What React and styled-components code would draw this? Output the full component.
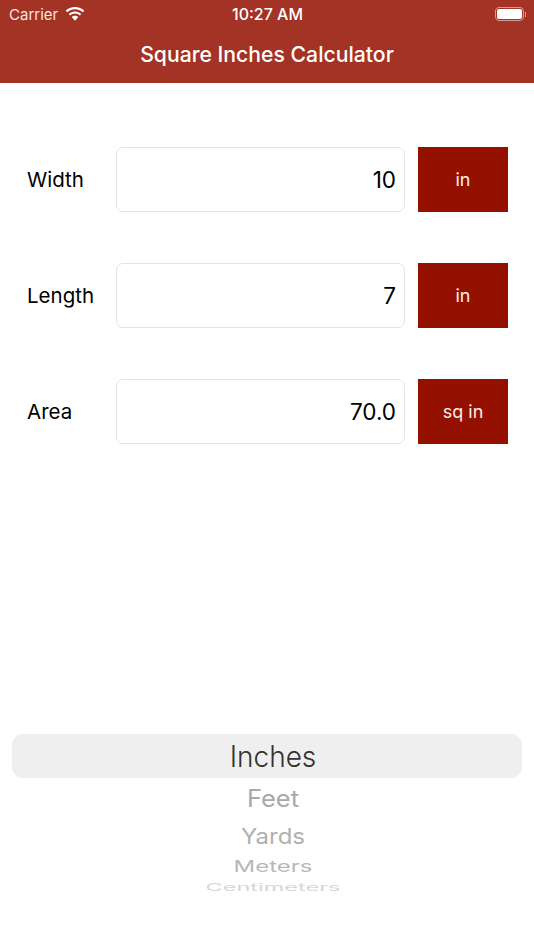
import React from 'react';
import styled, { createGlobalStyle } from 'styled-components';

const rows = [
  { label: 'Width', value: '10', unit: 'in' },
  { label: 'Length', value: '7', unit: 'in' },
  { label: 'Area', value: '70.0', unit: 'sq in' }
];

const wheel = [
  { name: 'Feet', size: 25.5, scale: 0.94, color: '#a9a9a9', height: 40 },
  { name: 'Yards', size: 24, scale: 0.9, color: '#b0b0b0', height: 36 },
  { name: 'Meters', size: 24, scale: 0.67, color: '#b8b8b8', height: 24 },
  { name: 'Centimeters', size: 23.5, scale: 0.46, color: '#d6d6d6', height: 18 }
];

const App = () => (
  <>
    <GlobalStyle />
    <Page>
      <Header>
        <StatusBar>
          <Carrier>
            Carrier
            <svg width="20" height="15" viewBox="0 0 20 15">
              <path
                d="M10 2.2c3 0 5.700 1.100 7.800 3.100l1.500-1.600C16.800 1.300 13.600 0 10 0S3.200 1.300.7 3.700l1.500 1.600C4.300 3.300 7 2.200 10 2.200z"
                fill="#fff"
              />
              <path
                d="M10 6.600c1.900 0 3.500.7 4.800 1.900l1.500-1.600C14.600 5.300 12.400 4.400 10 4.400s-4.600.9-6.300 2.500l1.500 1.600C6.500 7.300 8.100 6.600 10 6.600z"
                fill="#fff"
              />
              <path
                d="M10 8.800c-1.300 0-2.400.5-3.300 1.300L10 13.700l3.300-3.600C12.400 9.300 11.300 8.800 10 8.800z"
                fill="#fff"
              />
            </svg>
          </Carrier>
          <Clock>10:27 AM</Clock>
          <Battery>
            <BatteryShell>
              <BatteryFill />
            </BatteryShell>
            <BatteryCap />
          </Battery>
        </StatusBar>
        <Title>Square Inches Calculator</Title>
      </Header>

      <Form>
        {rows.map(row => (
          <Row key={row.label}>
            <Label>{row.label}</Label>
            <ValueBox>{row.value}</ValueBox>
            <UnitButton>{row.unit}</UnitButton>
          </Row>
        ))}
      </Form>

      <Picker>
        <Selected>
          <SelectedText>Inches</SelectedText>
        </Selected>
        {wheel.map(item => (
          <WheelItem key={item.name} $height={item.height}>
            <WheelText $size={item.size} $scale={item.scale} $color={item.color}>
              {item.name}
            </WheelText>
          </WheelItem>
        ))}
      </Picker>
    </Page>
  </>
);

const GlobalStyle = createGlobalStyle`
  html, body {
    margin: 0;
    padding: 0;
    background: #fff;
  }

  body {
    font-family: Inter, "Liberation Sans", sans-serif;
  }
`;

const Page = styled.div`
  width: 534px;
  height: 950px;
  overflow: hidden;
  display: flex;
  flex-direction: column;
  background: #fff;
`;

const Header = styled.header`
  height: 83px;
  background: #a33325;
  color: #fff;
  display: flex;
  flex-direction: column;
`;

const StatusBar = styled.div`
  height: 28px;
  display: grid;
  grid-template-columns: 1fr auto 1fr;
  align-items: center;
  padding: 0 8px 0 9px;
`;

const Carrier = styled.div`
  display: flex;
  align-items: center;
  gap: 7px;
  color: #f6e4e1;
  font-size: 15px;
`;

const Clock = styled.div`
  font-size: 16px;
  font-weight: 500;
`;

const Battery = styled.div`
  justify-self: end;
  display: flex;
  align-items: center;
  gap: 1px;
`;

const BatteryShell = styled.div`
  width: 29px;
  height: 14px;
  box-sizing: border-box;
  border: 1.5px solid #d69a92;
  border-radius: 4px;
  padding: 1px;
`;

const BatteryFill = styled.div`
  height: 100%;
  background: #fff;
  border-radius: 2px;
`;

const BatteryCap = styled.div`
  width: 1px;
  height: 5px;
  background: #d69a92;
`;

const Title = styled.h1`
  margin: 0;
  text-align: center;
  font-size: 21.2px;
  font-weight: 500;
  line-height: 53px;
`;

const Form = styled.main`
  padding: 64px 26px 0 26px;
  display: flex;
  flex-direction: column;
  gap: 51px;
`;

const Row = styled.div`
  display: flex;
  align-items: center;
  height: 65px;
`;

const Label = styled.div`
  width: 90px;
  padding-left: 1px;
  box-sizing: border-box;
  font-size: 20.5px;
  color: #000;
`;

const ValueBox = styled.div`
  width: 289px;
  height: 65px;
  box-sizing: border-box;
  border: 1px solid #e4e4e4;
  border-radius: 7px;
  padding: 0 8px;
  display: flex;
  align-items: center;
  justify-content: flex-end;
  font-size: 22.5px;
  color: #000;
`;

const UnitButton = styled.div`
  width: 90px;
  height: 65px;
  margin-left: 13px;
  background: #941100;
  color: #fbeeec;
  display: flex;
  align-items: center;
  justify-content: center;
  font-size: 18px;
`;

const Picker = styled.section`
  margin-top: auto;
  padding: 0 12px 54px;
  display: flex;
  flex-direction: column;
  align-items: center;
`;

const Selected = styled.div`
  align-self: stretch;
  height: 44px;
  padding-left: 12px;
  border-radius: 11px;
  background: #efefef;
  display: flex;
  align-items: center;
  justify-content: center;
`;

const SelectedText = styled.div`
  color: #333;
  font-size: 28px;
  font-weight: 300;
  transform: translateY(1px) scaleY(1.04);
`;

const WheelItem = styled.div`
  height: ${props => props.$height}px;
  padding-left: 12px;
  display: flex;
  align-items: center;
  justify-content: center;
`;

const WheelText = styled.div`
  font-size: ${props => props.$size}px;
  color: ${props => props.$color};
  transform: scaleY(${props => props.$scale});
`;

export default App;
